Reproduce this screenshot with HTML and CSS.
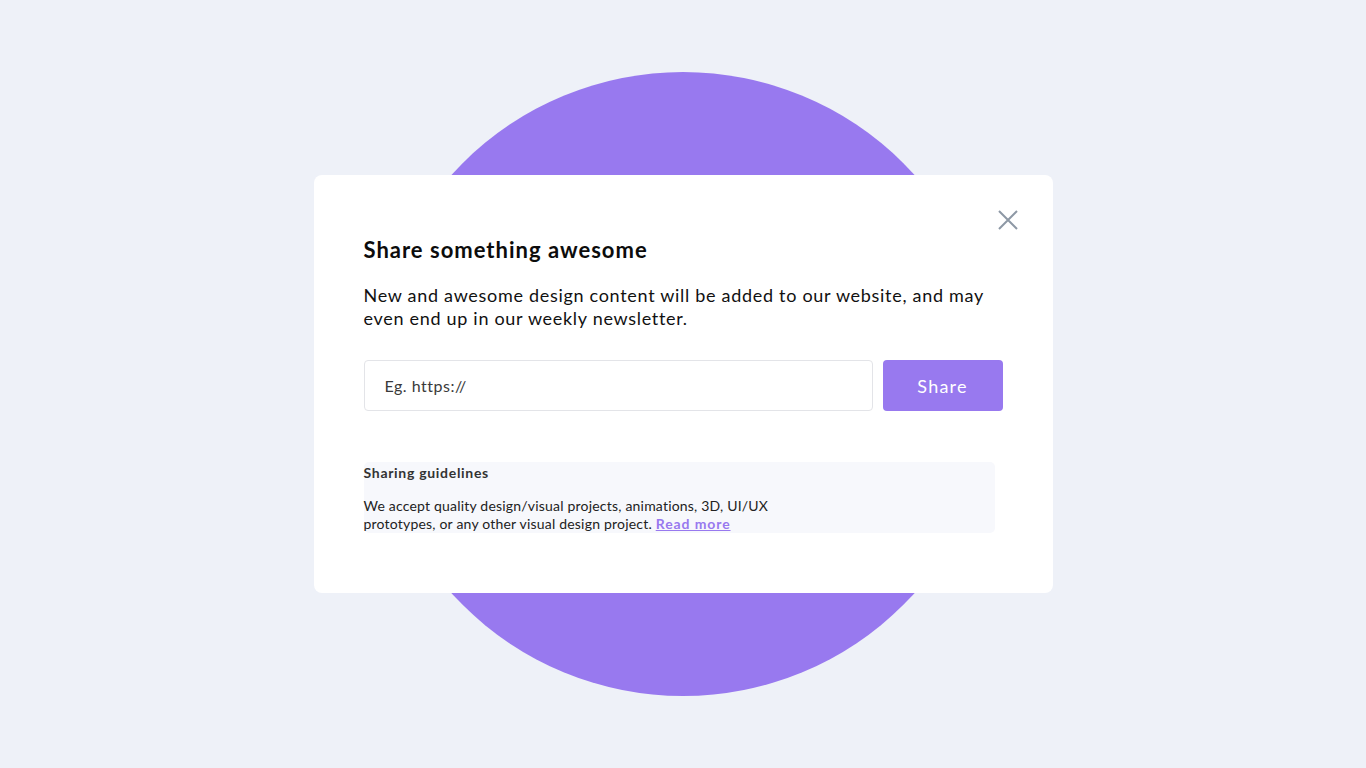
FILE: index.html
```html
<!DOCTYPE html>
<html lang="en">
<head>
<meta charset="utf-8">
<title>Share something awesome</title>
<link rel="stylesheet" href="styles.css">
</head>
<body>
<div class="stage">
  <div class="blob"></div>
  <div class="modal">
    <button class="close" aria-label="Close">
      <svg width="20" height="20" viewBox="0 0 20 20"><path d="M1 1L19 19M19 1L1 19" stroke="#8d98a5" stroke-width="2" fill="none"/></svg>
    </button>
    <h1 class="title">Share something awesome</h1>
    <p class="lead">New and awesome design content will be added to our website, and may even end up in our weekly newsletter.</p>
    <form class="share-form">
      <input class="url-input" type="text" placeholder="Eg. https://">
      <button class="share-btn" type="button">Share</button>
    </form>
    <div class="guidelines">
      <h2 class="g-title">Sharing guidelines</h2>
      <p class="g-text">We accept quality design/visual projects, animations, 3D, UI/UX prototypes, or any other visual design project. <a href="#">Read more</a></p>
    </div>
  </div>
</div>
</body>
</html>
```

FILE: styles.css
```css
* { box-sizing: border-box; }
html, body { margin: 0; padding: 0; }
body {
  background: #eef1f8;
  font-family: Lato, "Open Sans", sans-serif;
  color: #111;
}
.stage {
  position: relative;
  width: 1366px;
  height: 768px;
  display: flex;
  align-items: center;
  justify-content: center;
  overflow: hidden;
}
.blob {
  position: absolute;
  left: 371px;
  top: 72px;
  width: 624px;
  height: 624px;
  border-radius: 50%;
  background: #9879ef;
}
.modal {
  position: relative;
  width: 739px;
  height: 418px;
  background: #fff;
  border-radius: 8px;
  padding: 59px 50px 0 50px;
}
.close {
  position: absolute;
  top: 35px;
  right: 35px;
  width: 20px;
  height: 20px;
  padding: 0;
  border: 0;
  background: none;
  cursor: pointer;
}
.close svg { display: block; }
.title {
  margin: 0;
  font-size: 22px;
  font-weight: 700;
  letter-spacing: 1px;
  line-height: 32px;
  color: #0c0c0c;
}
.lead {
  margin: 18px 0 0;
  font-size: 18px;
  letter-spacing: 0.7px;
  line-height: 23px;
  color: #111;
  max-width: 630px;
}
.share-form {
  display: flex;
  gap: 10px;
  margin-top: 30px;
}
.url-input {
  width: 509px;
  height: 51px;
  border: 1px solid #e3e4e8;
  border-radius: 4px;
  padding: 0 20px;
  font-family: inherit;
  font-size: 16px;
  letter-spacing: 0.5px;
  color: #333;
  outline: none;
}
.url-input::placeholder { color: #3a3a3a; }
.share-btn {
  width: 120px;
  height: 51px;
  border: 0;
  border-radius: 4px;
  background: #9879ef;
  color: #fff;
  font-family: inherit;
  font-size: 18px;
  letter-spacing: 1.2px;
  cursor: pointer;
}
.guidelines {
  margin-top: 51px;
  width: 631px;
  height: 71px;
  background: #f7f8fc;
  border-radius: 5px;
}
.g-title {
  margin: 0;
  padding-top: 2px;
  font-size: 14px;
  font-weight: 700;
  letter-spacing: 0.7px;
  line-height: 18px;
  color: #333;
}
.g-text {
  margin: 15px 0 0;
  max-width: 420px;
  font-size: 14px;
  letter-spacing: 0.2px;
  line-height: 18px;
  color: #222;
}
.g-text a {
  color: #9879ef;
  font-weight: 700;
  letter-spacing: 0.9px;
}
```
